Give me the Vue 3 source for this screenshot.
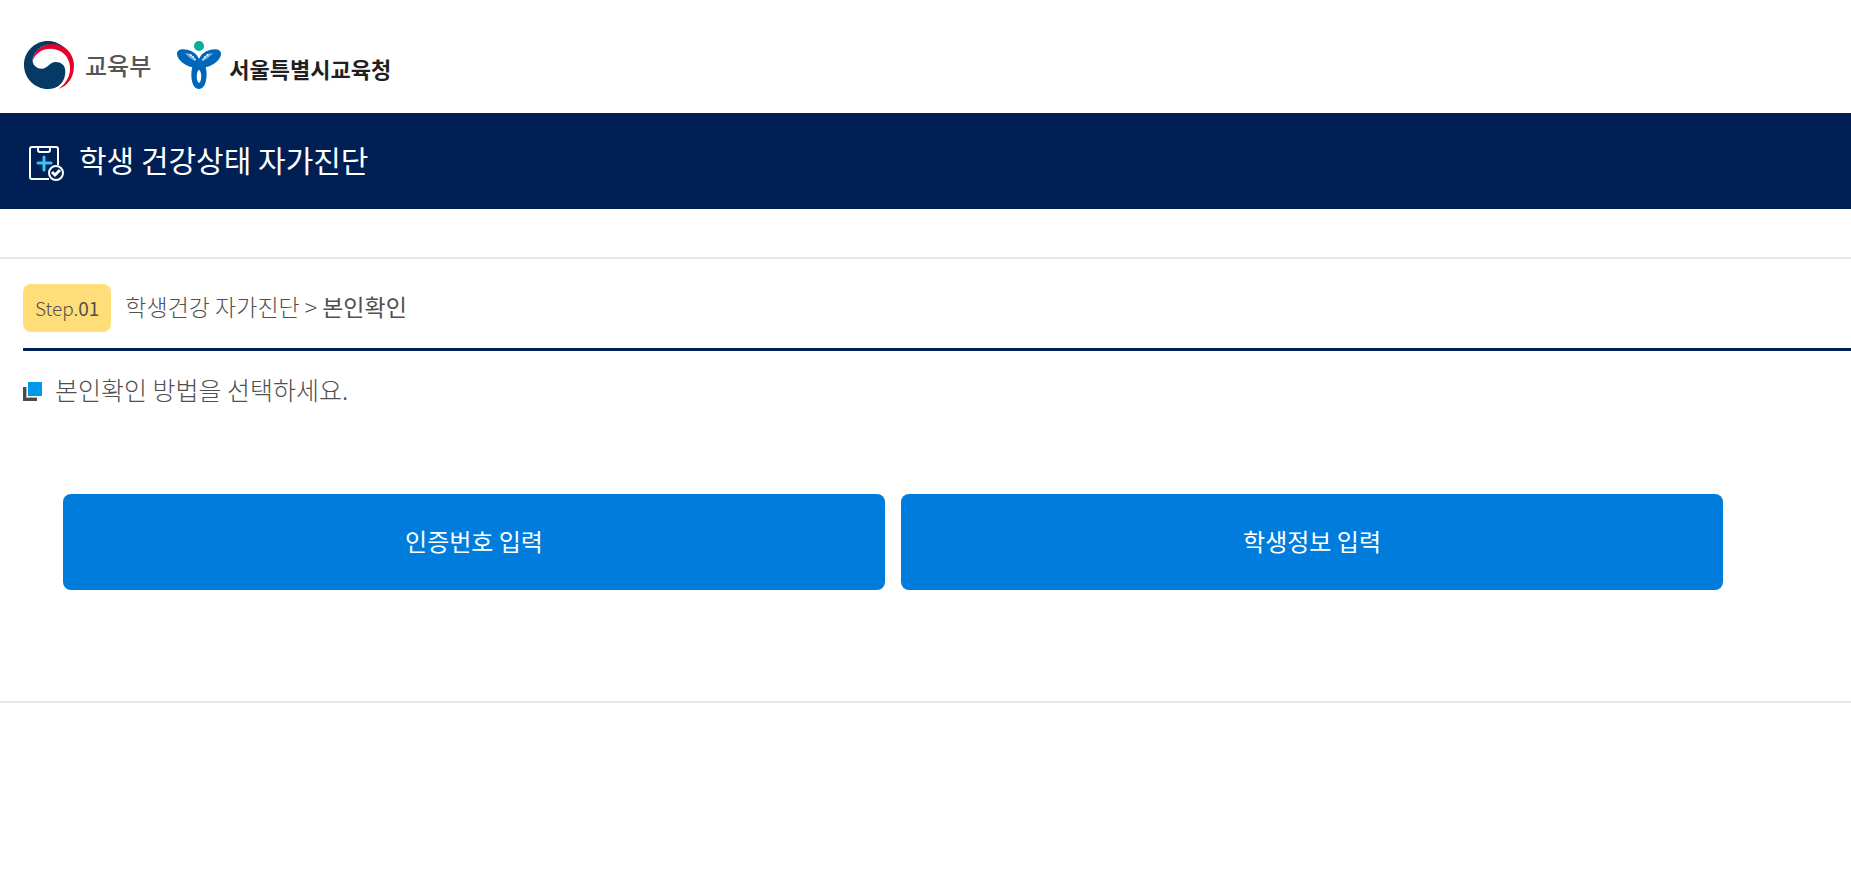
<script setup>
const methods = ['인증번호 입력', '학생정보 입력']
</script>

<template>
  <div class="page">
    <header class="agencies">
      <div class="agency">
        <svg class="ministry-mark" viewBox="0 0 150 144" aria-hidden="true">
          <path fill="#e4002b" d="M26 60C28 28 54 8 86 8C122 8 150 38 150 74C150 108 132 134 103 144C127 127 140 103 138 77C136 46 113 24 80 23C54 23 34 36 26 60Z" />
          <path fill="#063a66" d="M124 22C109 8 91 0 72 0C32 0 0 32 0 72C0 112 32 144 72 144C104 144 124 121 124 92C124 73 112 63 95 63C77 63 72 83 53 83C36 83 24 70 26 54C32 28 54 10 82 9C98 9 112 13 124 22Z" />
        </svg>
        <span class="ministry">교육부</span>
      </div>
      <div class="agency">
        <svg class="office-mark" viewBox="0 0 132 144" aria-hidden="true">
          <circle cx="66" cy="15" r="15" fill="#00b09b" />
          <path fill="#0066b8" d="M0 38C0 22 26 22 44 31C56 37 63 46 66 54C69 46 76 37 88 31C106 22 132 22 132 38C132 56 110 72 86 79C92 98 90 144 66 144C42 144 40 98 46 79C22 72 0 56 0 38Z" />
          <path fill="#fff" d="M66 86C57 92 57 120 66 126C75 120 75 92 66 86Z" />
          <path fill="#7fb3dd" d="M24 37C38 35 50 44 56 60C44 56 34 48 24 37ZM108 37C94 35 82 44 76 60C88 56 98 48 108 37Z" />
          <path fill="none" stroke="#fff" stroke-width="4" stroke-dasharray="7 3" d="M38 40C46 44 51 49 55 58M94 40C86 44 81 49 77 58" />
        </svg>
        <span class="office">서울특별시교육청</span>
      </div>
    </header>

    <div class="title-bar">
      <svg class="clipboard" viewBox="0 0 36 36" fill="none" stroke="#fff" stroke-width="2" aria-hidden="true">
        <path d="M21 34H4Q2 34 2 32V4Q2 2 4 2H28Q30 2 30 4V20" />
        <path d="M10 2V5Q10 7 12 7H20Q22 7 22 5V2" />
        <path stroke="#35c6f4" stroke-width="3" stroke-linecap="round" d="M16 12V25M10 18H23" />
        <circle cx="28" cy="28" r="7" />
        <path stroke-width="3" d="M24 27L27 30L32 25" />
      </svg>
      <h1>학생 건강상태 자가진단</h1>
    </div>

    <main class="content">
      <div class="step-row">
        <span class="step">Step.<b>01</b></span>
        <span class="trail">학생건강 자가진단 &gt; <b>본인확인</b></span>
      </div>
      <h2>
        <svg class="bullet" viewBox="0 0 19 19" aria-hidden="true">
          <path fill="#4a4a4a" d="M0 5H3V16H14V19H0Z" />
          <path fill="#b5b5b5" d="M3 5H4V15H14V16H3Z" />
          <path fill="#0098e8" d="M5 0H19V14H5Z" />
        </svg>
        <span>본인확인 방법을 선택하세요.</span>
      </h2>
      <div class="methods">
        <button v-for="method in methods" :key="method" type="button">{{ method }}</button>
      </div>
    </main>
  </div>
</template>

<style>
body {
  margin: 0;
  background: #fff;
}
</style>

<style scoped>
.page {
  font-family: "Noto Sans CJK KR", sans-serif;
  color: #505050;
}
.agencies {
  display: flex;
  gap: 26px;
  height: 72px;
  padding: 41px 24px 0;
}
.agency {
  display: flex;
  align-items: flex-start;
}
.ministry-mark {
  width: 50px;
  height: 48px;
}
.office-mark {
  width: 44px;
  height: 48px;
}
.ministry,
.office {
  line-height: 48px;
  white-space: nowrap;
}
.ministry {
  margin-left: 11px;
  font-size: 24px;
  font-weight: 500;
  color: #555;
}
.office {
  margin-left: 8px;
  padding-top: 3px;
  font-size: 22px;
  font-weight: 700;
  color: #231f20;
}
.title-bar {
  display: flex;
  align-items: center;
  height: 96px;
  padding-left: 28px;
  background: #001f55;
}
.clipboard {
  width: 36px;
  height: 36px;
  margin-top: 4px;
}
h1 {
  margin: 0 0 0 15px;
  padding-bottom: 4px;
  font-size: 30px;
  font-weight: 400;
  line-height: 40px;
  color: #fff;
}
.content {
  margin-top: 48px;
  padding: 25px 0 111px 23px;
  border-top: 2px solid #e7e7e7;
  border-bottom: 2px solid #e7e7e7;
}
.step-row {
  display: flex;
  align-items: center;
  gap: 14px;
  padding-bottom: 16px;
  border-bottom: 3px solid #001f55;
}
.step {
  padding: 0 12px;
  border-radius: 8px;
  background: #ffdd78;
  font-size: 19px;
  font-weight: 300;
  line-height: 48px;
}
.step b {
  font-weight: 400;
}
.trail {
  padding-bottom: 4px;
  font-size: 23px;
  font-weight: 300;
  line-height: 44px;
}
.trail b {
  font-weight: 400;
}
h2 {
  display: flex;
  align-items: center;
  gap: 13px;
  margin: 20px 0 0;
  font-size: 25px;
  font-weight: 300;
  line-height: 36px;
}
h2 span {
  padding-bottom: 4px;
}
.bullet {
  width: 19px;
  height: 19px;
}
.methods {
  display: flex;
  gap: 16px;
  margin-top: 83px;
  padding: 0 7% 0 40px;
}
button {
  flex: 1;
  height: 96px;
  padding: 0 0 4px;
  border: 0;
  border-radius: 8px;
  background: #007ddc;
  font-family: inherit;
  font-size: 24px;
  font-weight: 400;
  color: #fff;
  cursor: pointer;
}
</style>
